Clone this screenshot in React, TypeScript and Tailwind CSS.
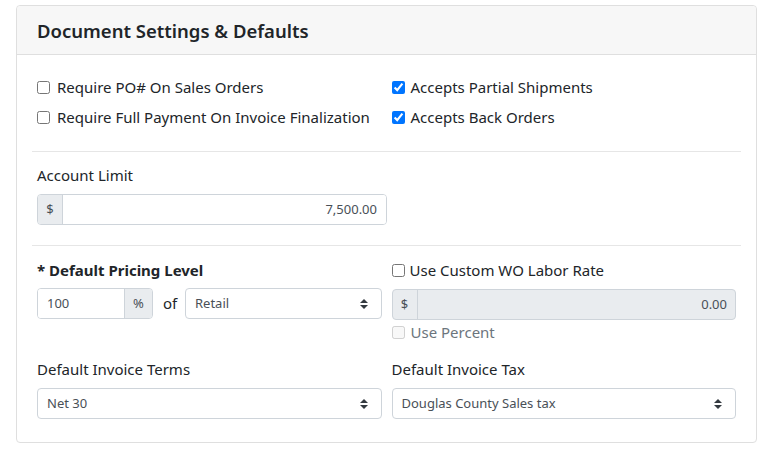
import React from "react";

const font = { fontFamily: '"Segoe UI", "Noto Sans", Arial, sans-serif' };

function Caret() {
  return (
    <svg width="8" height="10" viewBox="0 0 8 10" className="shrink-0">
      <path d="M4 0 L8 4 L0 4 Z M0 6 L8 6 L4 10 Z" fill="#343a40" />
    </svg>
  );
}

function Select({ value, className = "" }: { value: string; className?: string }) {
  return (
    <div
      className={`h-[31px] flex items-center justify-between pl-[9px] pr-[13px] border border-[#ced4da] rounded-[4px] bg-white text-[13px] text-[#495057] ${className}`}
    >
      <span>{value}</span>
      <Caret />
    </div>
  );
}

function Check({ label, checked = false, disabled = false, gap = "gap-[7px]" }: { label: string; checked?: boolean; disabled?: boolean; gap?: string }) {
  return (
    <label className={`flex items-center ${gap} h-[22px] text-[15px] ${disabled ? "text-[#6c757d]" : "text-[#212529]"}`}>
      <input type="checkbox" defaultChecked={checked} disabled={disabled} className="w-[13px] h-[13px] m-0" />
      <span>{label}</span>
    </label>
  );
}

export default function App() {
  return (
    <div className="bg-white min-h-screen pt-[5px] pl-4" style={font}>
      <div className="w-[741px] border border-[#dfdfdf] rounded-[4px] bg-white">
        <div className="h-[49px] flex items-center pt-[2px] px-5 bg-[#f7f7f7] border-b border-[#dfdfdf] rounded-t-[4px]">
          <h1 className="text-[18.5px] font-semibold text-[#212529]">Document Settings &amp; Defaults</h1>
        </div>

        <div className="px-[15px] pt-[17px] pb-[23px]">
          <div className="grid grid-cols-2">
            <div className="px-[5px]">
              <div className="h-[30px] flex items-center"><Check label="Require PO# On Sales Orders" /></div>
              <div className="h-[30px] flex items-center"><Check label="Require Full Payment On Invoice Finalization" /></div>
            </div>
            <div className="px-[5px]">
              <div className="h-[30px] flex items-center"><Check label="Accepts Partial Shipments" checked gap="gap-[6px]" /></div>
              <div className="h-[30px] flex items-center"><Check label="Accepts Back Orders" checked gap="gap-[6px]" /></div>
            </div>
          </div>

          <hr className="mt-[19px] border-t border-[#e6e6e6]" />

          <div className="px-[5px] mt-3">
            <div className="h-[22px] flex items-center text-[15px] text-[#212529]">Account Limit</div>
            <div className="mt-2 w-[350px] h-[31px] flex border border-[#ced4da] rounded-[4px] overflow-hidden text-[13px] text-[#495057]">
              <div className="w-[25px] flex items-center justify-center bg-[#e9ecef] border-r border-[#ced4da]">$</div>
              <div className="flex-1 flex items-center justify-end pr-[9px] bg-white">7,500.00</div>
            </div>
          </div>

          <hr className="mt-5 border-t border-[#e6e6e6]" />

          <div className="grid grid-cols-2 mt-[13px]">
            <div className="px-[5px]">
              <div className="h-[22px] flex items-center text-[15px] font-bold text-[#212529]">* Default Pricing Level</div>
              <div className="mt-[7px] flex items-center">
                <div className="w-[116px] h-[31px] flex border border-[#ced4da] rounded-[4px] overflow-hidden text-[13px] text-[#495057]">
                  <div className="flex-1 flex items-center pl-[9px] bg-white">100</div>
                  <div className="w-[28px] flex items-center justify-center bg-[#e9ecef] border-l border-[#ced4da]">%</div>
                </div>
                <span className="ml-[10px] w-[22px] text-[15px] text-[#212529]">of</span>
                <Select value="Retail" className="flex-1" />
              </div>
            </div>
            <div className="px-[5px]">
              <Check label="Use Custom WO Labor Rate" gap="gap-[5px]" />
              <div className="mt-[8px] h-[31px] flex border border-[#ced4da] rounded-[4px] overflow-hidden text-[13px] text-[#495057] bg-[#e9ecef]">
                <div className="w-[25px] flex items-center justify-center border-r border-[#ced4da]">$</div>
                <div className="flex-1 flex items-center justify-end pr-[8px]">0.00</div>
              </div>
              <div className="mt-px"><Check label="Use Percent" disabled gap="gap-[6px]" /></div>
            </div>
          </div>

          <div className="grid grid-cols-2 mt-[15px]">
            <div className="px-[5px]">
              <div className="h-[22px] flex items-center text-[15px] text-[#212529]">Default Invoice Terms</div>
              <Select value="Net 30" className="mt-2" />
            </div>
            <div className="px-[5px]">
              <div className="h-[22px] flex items-center text-[15px] text-[#212529]">Default Invoice Tax</div>
              <Select value="Douglas County Sales tax" className="mt-2" />
            </div>
          </div>
        </div>
      </div>
    </div>
  );
}
